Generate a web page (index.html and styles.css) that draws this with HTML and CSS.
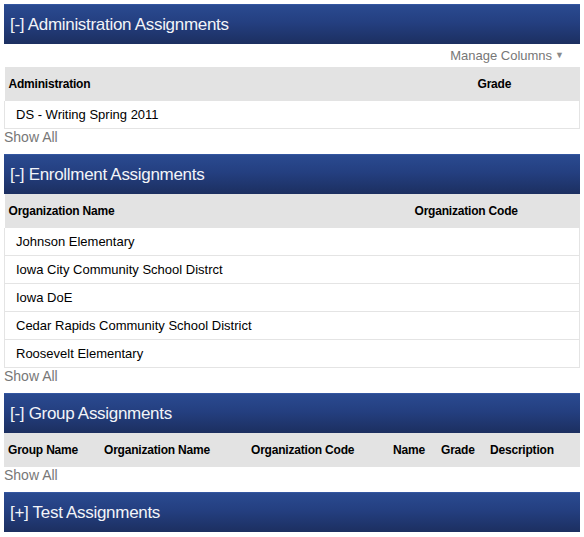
FILE: index.html
```html
<!DOCTYPE html>
<html>
<head>
<meta charset="utf-8">
<link rel="stylesheet" href="styles.css">
</head>
<body>
<div class="page">
  <section class="panel">
    <h2 class="panel-head">[-] Administration Assignments</h2>
    <div class="toolbar"><span class="manage">Manage Columns</span><span class="caret">&#9660;</span></div>
    <table class="grid">
      <colgroup><col class="c-admin"><col></colgroup>
      <thead><tr><th>Administration</th><th>Grade</th></tr></thead>
      <tbody>
        <tr><td>DS - Writing Spring 2011</td><td></td></tr>
      </tbody>
    </table>
    <a class="show-all">Show All</a>
  </section>

  <section class="panel">
    <h2 class="panel-head">[-] Enrollment Assignments</h2>
    <table class="grid">
      <colgroup><col class="c-org"><col></colgroup>
      <thead><tr><th>Organization Name</th><th>Organization Code</th></tr></thead>
      <tbody>
        <tr><td>Johnson Elementary</td><td></td></tr>
        <tr><td>Iowa City Community School Distrct</td><td></td></tr>
        <tr><td>Iowa DoE</td><td></td></tr>
        <tr><td>Cedar Rapids Community School District</td><td></td></tr>
        <tr><td>Roosevelt Elementary</td><td></td></tr>
      </tbody>
    </table>
    <a class="show-all">Show All</a>
  </section>

  <section class="panel">
    <h2 class="panel-head">[-] Group Assignments</h2>
    <table class="grid">
      <colgroup><col class="g1"><col class="g2"><col class="g3"><col class="g4"><col class="g5"><col></colgroup>
      <thead><tr><th>Group Name</th><th>Organization Name</th><th>Organization Code</th><th>Name</th><th>Grade</th><th>Description</th></tr></thead>
    </table>
    <a class="show-all">Show All</a>
  </section>

  <section class="panel">
    <h2 class="panel-head">[+] Test Assignments</h2>
  </section>
</div>
</body>
</html>
```

FILE: styles.css
```css
html, body {
  margin: 0;
  padding: 0;
  background: #ffffff;
}
body {
  font-family: "Liberation Sans", Arial, sans-serif;
  color: #000;
}
.page {
  padding: 4px 4px 0 4px;
  display: flex;
  flex-direction: column;
}
.panel {
  display: flex;
  flex-direction: column;
}
.panel-head {
  margin: 0;
  height: 40px;
  line-height: 40px;
  padding: 0 6px;
  font-size: 17px;
  letter-spacing: -0.3px;
  font-weight: normal;
  color: #f2f4f8;
  background: linear-gradient(to bottom, #2a4a90 0%, #243f80 45%, #1c2f60 100%);
  border-top: 1px solid #3456a0;
  box-sizing: border-box;
}
.toolbar {
  height: 23px;
  display: flex;
  justify-content: flex-end;
  align-items: center;
  padding-right: 16px;
  font-size: 13px;
  color: #777;
}
.caret {
  font-size: 9px;
  color: #8a8a8a;
  margin-left: 3px;
  margin-top: -1px;
}
.grid {
  width: 100%;
  border-collapse: collapse;
  table-layout: fixed;
}
.grid th {
  height: 34px;
  padding: 0 4px;
  text-align: left;
  font-size: 12px;
  letter-spacing: -0.2px;
  font-weight: bold;
  background: #e3e3e3;
  white-space: nowrap;
}
.grid td {
  height: 27px;
  padding: 0 11px;
  font-size: 13px;
  border-bottom: 1px solid #e4e4e4;
  white-space: nowrap;
}
.grid td:first-child {
  border-left: 1px solid #e4e4e4;
}
.grid td:last-child {
  border-right: 1px solid #e4e4e4;
}
.c-admin { width: 469px; }
.c-org { width: 406px; }
.g1 { width: 96px; }
.g2 { width: 147px; }
.g3 { width: 142px; }
.g4 { width: 48px; }
.g5 { width: 49px; }
.show-all {
  display: block;
  font-size: 14px;
  line-height: 17px;
  color: #777;
  margin-bottom: 8px;
}
```
